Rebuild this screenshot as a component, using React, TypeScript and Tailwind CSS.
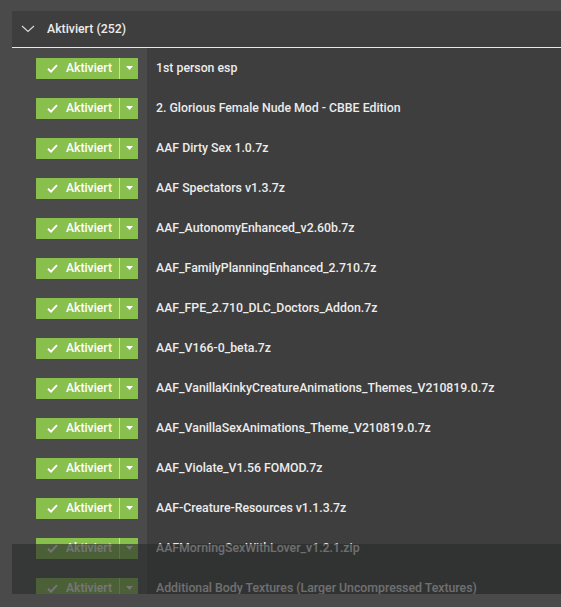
import React from "react"

const mods: string[] = [
    "1st person esp",
    "2. Glorious Female Nude Mod - CBBE Edition",
    "AAF Dirty Sex 1.0.7z",
    "AAF Spectators v1.3.7z",
    "AAF_AutonomyEnhanced_v2.60b.7z",
    "AAF_FamilyPlanningEnhanced_2.710.7z",
    "AAF_FPE_2.710_DLC_Doctors_Addon.7z",
    "AAF_V166-0_beta.7z",
    "AAF_VanillaKinkyCreatureAnimations_Themes_V210819.0.7z",
    "AAF_VanillaSexAnimations_Theme_V210819.0.7z",
    "AAF_Violate_V1.56 FOMOD.7z",
    "AAF-Creature-Resources v1.1.3.7z",
    "AAFMorningSexWithLover_v1.2.1.zip",
    "Additional Body Textures (Larger Uncompressed Textures)",
]

const StatusButton: React.FC = () => (
    <div className="flex h-[21px] w-[102px] items-stretch bg-[#89bf4c] text-white">
        <div className="flex flex-1 items-center pl-[11px]">
            <svg width="11" height="9" viewBox="0 0 11 9" className="mr-[8px]">
                <path d="M1 4.8 L4 7.6 L10 1.2" fill="none" stroke="white" strokeWidth="1.9" />
            </svg>
            <span className="text-[12.2px] font-medium leading-none">Aktiviert</span>
        </div>
        <div className="w-px bg-[#c8e3a8]" />
        <div className="flex w-[18px] items-center justify-center">
            <svg width="7" height="4" viewBox="0 0 7 4">
                <path d="M0 0 L7 0 L3.5 4 Z" fill="white" />
            </svg>
        </div>
    </div>
)

const App: React.FC = () => {
    return (
        <div className="h-[607px] w-full overflow-hidden bg-[#4a4a4a] pl-[12px] pt-[11px] font-['Roboto',sans-serif]">
            <div className="relative h-[583px] overflow-hidden">
                <div className="flex h-[37px] items-center border-b border-[#e8e8e8] bg-[#3e3e3e]">
                    <svg width="14" height="8" viewBox="0 0 14 8" className="ml-[9px] mr-[12px]">
                        <path d="M1 1 L7 6.5 L13 1" fill="none" stroke="#d8d8d8" strokeWidth="1.2" />
                    </svg>
                    <span className="text-[12.3px] font-medium text-[#ececec]">Aktiviert (252)</span>
                </div>
                {mods.map((name) => (
                    <div key={name} className="flex h-10">
                        <div className="flex w-[135px] items-center pl-[24px]">
                            <StatusButton />
                        </div>
                        <div className="flex flex-1 items-center bg-[#3e3e3e] pl-[9px]">
                            <span className="text-[12.3px] font-medium text-[#ececec]">{name}</span>
                        </div>
                    </div>
                ))}
                <div className="absolute bottom-0 left-0 right-0 h-[50px] bg-[#2b2c2c]/65" />
            </div>
        </div>
    )
}

export default App
